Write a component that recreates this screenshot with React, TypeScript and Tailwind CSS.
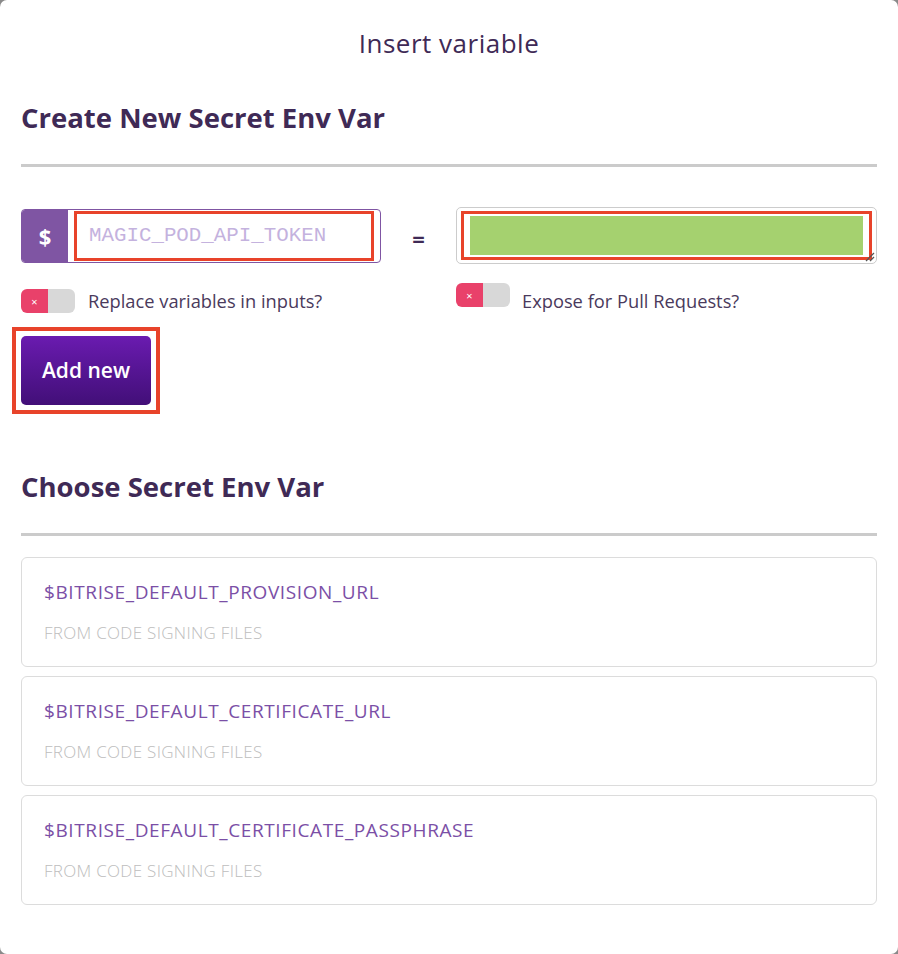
import React from 'react'

const FONT = { fontFamily: '"Open Sans", "Noto Sans", sans-serif' }

const vars = [
  '$BITRISE_DEFAULT_PROVISION_URL',
  '$BITRISE_DEFAULT_CERTIFICATE_URL',
  '$BITRISE_DEFAULT_CERTIFICATE_PASSPHRASE',
]

function Toggle() {
  return (
    <div className="flex w-[54px] h-[24px] rounded-[6px] overflow-hidden shrink-0">
      <div className="w-[27px] bg-[#e9416a] flex items-center justify-center text-white text-[11px] leading-none">
        ×
      </div>
      <div className="flex-1 bg-[#d8d8d8]" />
    </div>
  )
}

export default function App() {
  return (
    <div className="bg-[#8a8a8a] min-h-[954px]" style={FONT}>
      <div className="bg-white rounded-[7px] min-h-[954px] px-[21px] text-[#3f2a56]">
        {/* Modal title */}
        <div className="pt-[26px] text-center text-[26px] leading-[34px] font-normal tracking-[0.5px]">Insert variable</div>

        {/* Create section */}
        <h2 className="mt-[41px] text-[27.5px] leading-[34px] font-bold">Create New Secret Env Var</h2>
        <div className="mt-[29px] h-[3px] bg-[#cbcbcb]" />

        <div className="mt-[42px] flex items-start">
          <div className="w-[360px] shrink-0">
            <div className="flex h-[54px] border border-[#7f55a3] rounded-[4px] overflow-hidden">
              <div className="w-[46px] bg-[#7f55a3] flex items-center justify-center text-white text-[22px] font-bold">
                $
              </div>
              <div className="flex-1 px-[6px] py-[1px]">
                <div className="h-full border-[3px] border-[#e8432a] flex items-center pl-[12px] text-[20.8px] text-[#c4b2de]" style={{ fontFamily: '"Liberation Mono", monospace' }}>
                  MAGIC_POD_API_TOKEN
                </div>
              </div>
            </div>
            <div className="mt-[26px] flex items-center gap-[13px]">
              <Toggle />
              <span className="text-[18.3px] leading-[24px] text-[#4a3a5c]">Replace variables in inputs?</span>
            </div>
          </div>

          <div className="w-[75px] shrink-0 flex justify-center pt-[13px] text-[22px] font-bold">=</div>

          <div className="flex-1 -mt-[2px]">
            <div className="relative h-[57px] border border-[#cccccc] rounded-[5px] px-[4px] py-[3px]">
              <div className="h-full border-[3px] border-[#e8432a] bg-white px-[6px] py-[2px]">
                <div className="h-full bg-[#a5d16f]" />
              </div>
              <svg className="absolute right-[1px] bottom-[1px]" width="12" height="12" viewBox="0 0 12 12">
                <path d="M11 3 L3 11 M11 7 L7 11" stroke="#555" strokeWidth="1.3" />
              </svg>
            </div>
            <div className="mt-[19px] flex items-start gap-[12px]">
              <Toggle />
              <span className="text-[18.3px] leading-[24px] text-[#4a3a5c] mt-[6px]">Expose for Pull Requests?</span>
            </div>
          </div>
        </div>

        <div className="mt-[14px] -ml-[9px] inline-block border-[4px] border-[#e8432a] p-[5px]">
          <button className="block w-[130px] h-[69px] rounded-[5px] bg-gradient-to-b from-[#6a1bb0] to-[#420f78] text-white text-[21px] font-semibold">
            Add new
          </button>
        </div>

        {/* Choose section */}
        <h2 className="mt-[56px] text-[27.5px] leading-[34px] font-bold">Choose Secret Env Var</h2>
        <div className="mt-[29px] h-[3px] bg-[#cbcbcb]" />

        <div className="mt-[21px] flex flex-col gap-[9px]">
          {vars.map((v) => (
            <div key={v} className="h-[110px] border border-[#dcdcdc] rounded-[6px] px-[22px] pt-[22px]">
              <div className="text-[19px] leading-[24px] text-[#7b4fa6] tracking-[0.6px]">{v}</div>
              <div className="mt-[19px] text-[17px] leading-[20px] text-[#bdbdbd] font-light tracking-[0.3px]">FROM CODE SIGNING FILES</div>
            </div>
          ))}
        </div>
      </div>
    </div>
  )
}
